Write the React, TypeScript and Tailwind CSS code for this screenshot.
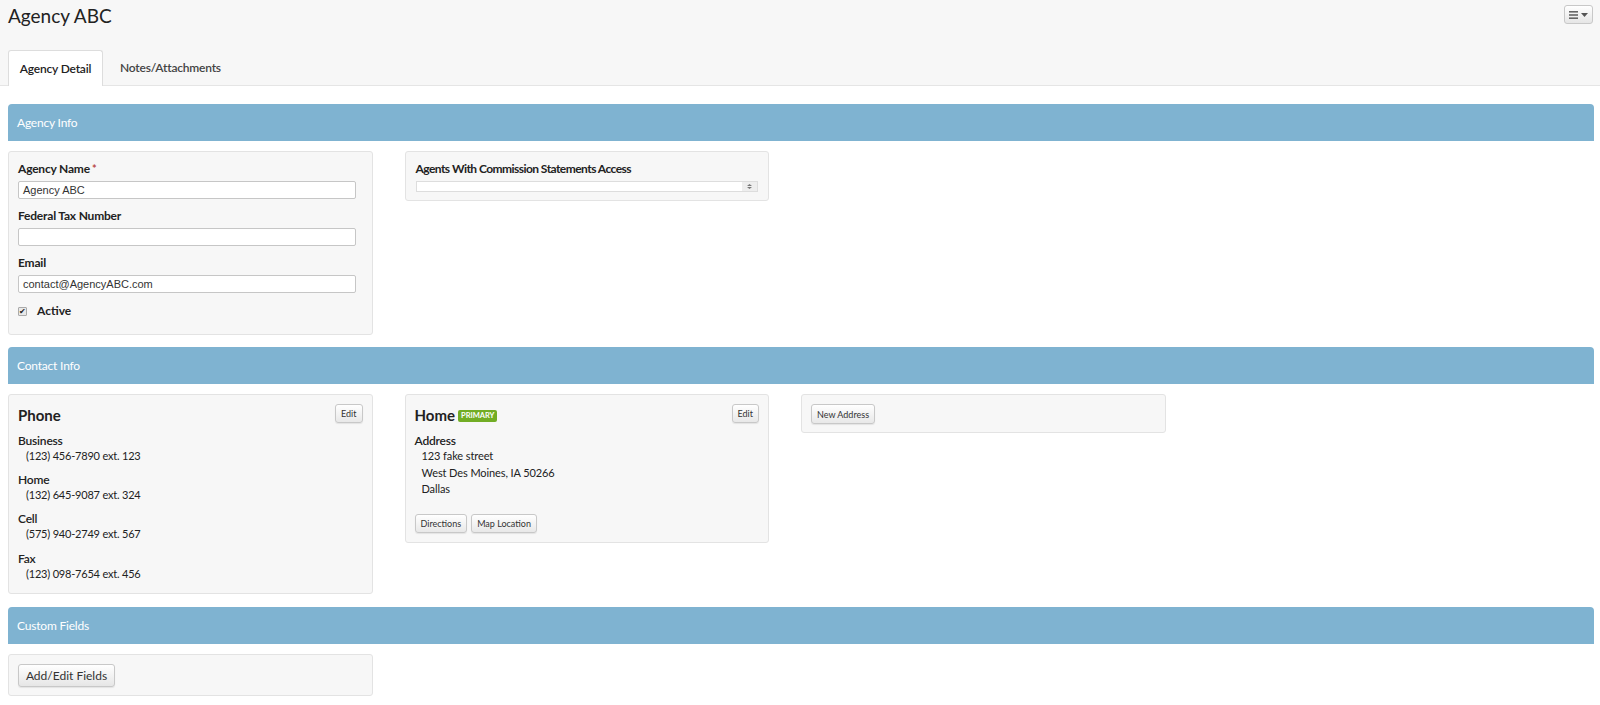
import type { ReactNode } from "react";

function SmallButton({ children, className = "" }: { children: ReactNode; className?: string }) {
  return (
    <button
      className={
        "h-[19px] px-[5px] rounded-[3px] border border-[#c8c8c8] bg-gradient-to-b from-white to-[#e8e8e8] text-[9px] leading-none text-[#333] shadow-[0_1px_1px_rgba(0,0,0,0.08)] " +
        className
      }
    >
      {children}
    </button>
  );
}

function Section({ title, className = "", children }: { title: string; className?: string; children: ReactNode }) {
  return (
    <section className={className}>
      <div className="h-[37px] rounded-t-[4px] bg-[#7fb3d1] px-[9px] flex items-center text-[12px] tracking-[-0.2px] text-white">
        {title}
      </div>
      <div className="mt-[10px] grid grid-cols-4 items-start">{children}</div>
    </section>
  );
}

function Card({ children, className = "" }: { children: ReactNode; className?: string }) {
  return (
    <div className={"mr-[32px] rounded-[3px] border border-[#e3e3e3] bg-[#f7f7f7] " + className}>
      {children}
    </div>
  );
}

function Field({ label, value, required, className = "" }: { label: string; value?: string; required?: boolean; className?: string }) {
  return (
    <div className={className}>
      <div className="text-[12px] font-bold leading-[16px] mb-[4px] tracking-[-0.2px]">
        {label}
        {required && <span className="text-[#b94a48] ml-[2px] align-top text-[11px]">*</span>}
      </div>
      <div className="mr-[7px] h-[18px] rounded-[2px] border border-[#c6c6c6] bg-white px-[4px] flex items-center font-['Liberation_Sans',Arial,sans-serif] text-[11px] text-[#333]">
        {value}
      </div>
    </div>
  );
}

function PhoneEntry({ label, value, className = "" }: { label: string; value: string; className?: string }) {
  return (
    <div className={className}>
      <div className="text-[12px] leading-[15px] font-semibold tracking-[-0.2px]">{label}</div>
      <div className="text-[11px] leading-[15px] pl-[8px] tracking-[-0.2px]">{value}</div>
    </div>
  );
}

export default function App() {
  return (
    <div className="min-h-[705px] bg-white font-['Lato',sans-serif] text-[#222]">
      {/* TOP BAR */}
      <div className="bg-[#f7f7f7] border-b border-[#e5e5e5] pl-2 pr-[7px]">
        <div className="flex justify-between items-start pt-[1px]">
          <h1 className="text-[19px] leading-[30px] text-[#222]">Agency ABC</h1>
          <button className="mt-[4px] h-[19px] w-[29px] rounded-[3px] border border-[#c8c8c8] bg-gradient-to-b from-white to-[#e6e6e6] flex items-center justify-center gap-[3px]">
            <svg width="9" height="8" viewBox="0 0 9 8">
              <rect x="0" y="0" width="9" height="1.6" fill="#666" />
              <rect x="0" y="3.2" width="9" height="1.6" fill="#666" />
              <rect x="0" y="6.4" width="9" height="1.6" fill="#666" />
            </svg>
            <svg width="7" height="4" viewBox="0 0 7 4">
              <path d="M0 0 L7 0 L3.5 4 Z" fill="#555" />
            </svg>
          </button>
        </div>

        {/* TABS */}
        <div className="flex mt-[19px] -mb-px">
          <div className="h-[36px] w-[95px] flex items-center justify-center rounded-t-[3px] border border-b-0 border-[#ddd] bg-white text-[12px] font-semibold text-[#222] tracking-[-0.2px]">
            Agency Detail
          </div>
          <div className="h-[36px] flex items-center px-[17px] text-[12px] font-semibold text-[#444] tracking-[-0.2px]">
            Notes/Attachments
          </div>
        </div>
      </div>

      {/* CONTENT */}
      <div className="pl-2 pr-[6px] pt-[18px] pb-[9px]">
        <Section title="Agency Info">
          <Card className="px-[9px] pt-[9px] pb-[15px]">
            <Field label="Agency Name" required value="Agency ABC" />
            <Field label="Federal Tax Number" className="mt-[9px]" />
            <Field label="Email" value="contact@AgencyABC.com" className="mt-[9px]" />
            <div className="mt-[10px] h-[16px] flex items-center">
              <span className="w-[9px] h-[9px] rounded-[1px] border border-[#aaa] bg-[#e9e9e9] flex items-center justify-center text-[8px] leading-none text-[#222]">
                ✔
              </span>
              <span className="ml-[10px] text-[12px] font-bold">Active</span>
            </div>
          </Card>
          <Card className="px-[10px] pt-[9px] pb-[8px]">
            <div className="text-[12px] font-bold leading-[16px] mb-[4px] tracking-[-0.55px]">Agents With Commission Statements Access</div>
            <div className="h-[11px] border border-[#ddd] bg-white flex justify-end">
              <div className="w-[15px] bg-[#eee] flex items-center justify-center">
                <svg width="5" height="5" viewBox="0 0 5 5">
                  <path d="M0 2 L2.5 0 L5 2 Z M0 3 L5 3 L2.5 5 Z" fill="#777" />
                </svg>
              </div>
            </div>
          </Card>
        </Section>

        <Section title="Contact Info" className="mt-[12px]">
          <Card className="px-[9px] pt-[9px] pb-[12px]">
            <div className="flex justify-between items-start">
              <h4 className="pt-[2px] text-[15px] leading-[19px] font-bold">Phone</h4>
              <SmallButton>Edit</SmallButton>
            </div>
            <PhoneEntry label="Business" value="(123) 456-7890 ext. 123" className="mt-[8px]" />
            <PhoneEntry label="Home" value="(132) 645-9087 ext. 324" className="mt-[9px]" />
            <PhoneEntry label="Cell" value="(575) 940-2749 ext. 567" className="mt-[9px]" />
            <PhoneEntry label="Fax" value="(123) 098-7654 ext. 456" className="mt-[10px]" />
          </Card>
          <Card className="px-[9px] pt-[9px] pb-[9px]">
            <div className="flex justify-between items-start">
              <h4 className="pt-[2px] text-[15px] leading-[19px] font-bold flex items-center">
                Home
                <span className="ml-[3px] h-[12px] px-[3px] rounded-[2px] bg-[#72ad25] text-white text-[7.5px] font-bold leading-[12px]">
                  PRIMARY
                </span>
              </h4>
              <SmallButton>Edit</SmallButton>
            </div>
            <div className="mt-[8px] text-[12px] leading-[15px] font-semibold tracking-[-0.2px]">Address</div>
            <div className="pl-[7px] text-[11px] leading-[16.5px] tracking-[-0.1px]">
              <div>123 fake street</div>
              <div>West Des Moines, IA 50266</div>
              <div>Dallas</div>
            </div>
            <div className="mt-[16px] flex gap-[4px]">
              <SmallButton>Directions</SmallButton>
              <SmallButton>Map Location</SmallButton>
            </div>
          </Card>
          <Card className="px-[9px] pt-[9px] pb-[8px] flex">
            <SmallButton className="h-[20px]">New Address</SmallButton>
          </Card>
        </Section>

        <Section title="Custom Fields" className="mt-[13px]">
          <Card className="px-[9px] pt-[9px] pb-[8px] flex">
            <button className="h-[23px] w-[97px] rounded-[3px] border border-[#c8c8c8] bg-gradient-to-b from-white to-[#e6e6e6] text-[12px] text-[#333] shadow-[0_1px_1px_rgba(0,0,0,0.08)]">
              Add/Edit Fields
            </button>
          </Card>
        </Section>
      </div>
    </div>
  );
}
